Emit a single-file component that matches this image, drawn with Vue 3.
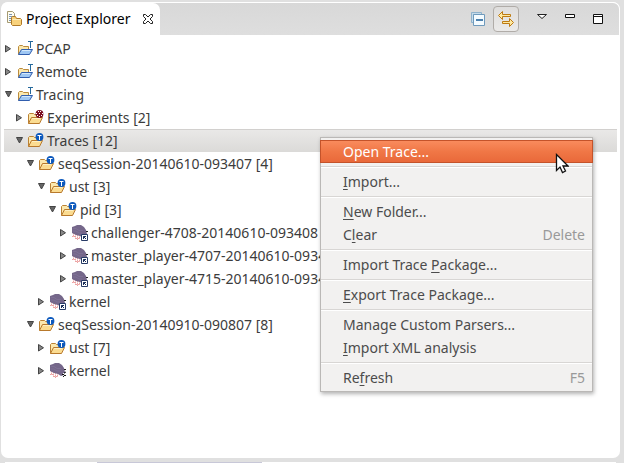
<script setup>
import { ref } from 'vue'

const rows = ref([
  { label: 'PCAP', depth: 0, icon: 'project', open: false },
  { label: 'Remote', depth: 0, icon: 'project', open: false },
  { label: 'Tracing', depth: 0, icon: 'project', open: true },
  { label: 'Experiments [2]', depth: 1, icon: 'experiments', open: false },
  { label: 'Traces [12]', depth: 1, icon: 'traces', open: true, selected: true },
  { label: 'seqSession-20140610-093407 [4]', depth: 2, icon: 'traces', open: true },
  { label: 'ust [3]', depth: 3, icon: 'traces', open: true },
  { label: 'pid [3]', depth: 4, icon: 'traces', open: true },
  { label: 'challenger-4708-20140610-093408', depth: 5, icon: 'link', open: false },
  { label: 'master_player-4707-20140610-093408', depth: 5, icon: 'link', open: false },
  { label: 'master_player-4715-20140610-093408', depth: 5, icon: 'link', open: false },
  { label: 'kernel', depth: 3, icon: 'link', open: false },
  { label: 'seqSession-20140910-090807 [8]', depth: 2, icon: 'traces', open: true },
  { label: 'ust [7]', depth: 3, icon: 'traces', open: false },
  { label: 'kernel', depth: 3, icon: 'kernel', open: false },
])

// Each label is split into [before, mnemonic, after]
const groups = [
  [{ text: ['Open Trace...', '', ''], active: true }],
  [{ text: ['', 'I', 'mport...'] }],
  [{ text: ['', 'N', 'ew Folder...'] }, { text: ['C', 'l', 'ear'], key: 'Delete' }],
  [{ text: ['Import Trace ', 'P', 'ackage...'] }],
  [{ text: ['', 'E', 'xport Trace Package...'] }],
  [{ text: ['Manage Custom Parsers...', '', ''] }, { text: ['', 'I', 'mport XML analysis'] }],
  [{ text: ['Re', 'f', 'resh'], key: 'F5' }],
]
</script>

<template>
  <div class="workbench">
    <section class="view">
      <header class="bar">
        <div class="tab">
          <svg class="tab-icon" width="16" height="16" viewBox="0 0 16 16">
            <path d="M1.500 .5h5l2 2v9h-7z" fill="#fffdf0" stroke="#a59a72" />
            <path d="M3 3.500h3M3 5.500h4M3 7.500h2M3 9.500h2" stroke="#7894b8" />
            <path d="M5.500 13.500v-7l1-1h3l1 2h4l1 1v5l-1 1h-8z" fill="#f8d27c" stroke="#b07a28" />
            <path d="M6.500 8.500h8" stroke="#fdecb8" />
          </svg>
          <h1 class="title">Project Explorer</h1>
          <button class="close" aria-label="Close">
            <svg width="12" height="12" viewBox="0 0 12 12">
              <path d="M1.500 1.500h2l2.500 2.500 2.500-2.500h2v2l-2.500 2.500 2.500 2.500v2h-2l-2.500-2.500-2.500 2.500h-2v-2l2.500-2.500-2.500-2.500z" fill="#fff" stroke="#222" />
            </svg>
          </button>
        </div>
        <div class="tools">
          <button class="tool" aria-label="Collapse All">
            <svg width="14" height="14" viewBox="0 0 14 14">
              <path d="M.5 10.500v-10h10v2h-8v8z" fill="#c5dbea" stroke="#8fb2cc" />
              <path d="M2.500 2.500h11v11h-11z" fill="#f4fbff" stroke="#6f9abc" />
              <path d="M5 8h7" stroke="#155895" stroke-width="1.300" />
            </svg>
          </button>
          <button class="tool pressed" aria-label="Link with Editor" aria-pressed="true">
            <svg width="16" height="16" viewBox="0 0 16 16">
              <path d="M.5 4.500l4-4v3h8v2h-8v3z" fill="#ffe9a0" stroke="#bd7a12" />
              <path d="M15.500 11.500l-4-4v3h-7v2h7v3z" fill="#ffe9a0" stroke="#bd7a12" />
            </svg>
          </button>
          <button class="tool menu-tool" aria-label="View Menu">
            <svg width="12" height="12" viewBox="0 0 12 12">
              <path d="M1.500 1.500h9l-4.500 4z" fill="#fff" stroke="#222" />
            </svg>
          </button>
          <button class="tool" aria-label="Minimize">
            <svg width="12" height="12" viewBox="0 0 12 12">
              <path d="M1.500 1.500h9v3h-9z" fill="#fff" stroke="#111" />
            </svg>
          </button>
          <button class="tool" aria-label="Maximize">
            <svg width="12" height="12" viewBox="0 0 12 12">
              <path d="M1.500 1.500h9v9h-9zM1 3.500h10" fill="#fff" stroke="#111" />
            </svg>
          </button>
        </div>
      </header>

      <ul class="tree" role="tree">
        <li
          v-for="(row, i) in rows"
          :key="i"
          role="treeitem"
          :aria-level="row.depth + 1"
          :aria-expanded="row.open"
          :aria-selected="!!row.selected"
          :class="['row', 'depth-' + row.depth, { selected: row.selected }]"
        >
          <button class="twisty" :aria-label="'Toggle ' + row.label" @click="row.open = !row.open">
            <svg width="10" height="10" viewBox="0 0 10 10">
              <path v-if="row.open" d="M1.500 1.500h6l-3 5.500z" fill="#666" stroke="#444" />
              <path v-else d="M1.500 1.500v6.500l5-3.250z" fill="#888" stroke="#444" />
            </svg>
          </button>
          <svg class="icon" width="16" height="16" viewBox="0 0 16 16">
            <template v-if="row.icon === 'project'">
              <path d="M1.500 13.500v-8l1-1h3l1 1h5v3" fill="#fbe8ae" stroke="#bb8b3c" />
              <path d="M1.500 13.500l3-5h11l-3 5z" fill="#9fc7f3" stroke="#315eae" />
              <path d="M5 9.500h8" stroke="#d4e9fc" />
              <path d="M11 .5h5M13.500 1v6" stroke="#25689b" />
            </template>
            <template v-else-if="row.icon === 'experiments' || row.icon === 'traces'">
              <path d="M.5 13.500v-9l1-1h4l1 1h5v4" fill="#fbe8ae" stroke="#bb8234" />
              <path d="M.5 13.500l3-6h11l-3 6z" fill="#fbdc91" stroke="#b8792c" />
              <path d="M4 8.500h8" stroke="#fff0c2" />
              <template v-if="row.icon === 'traces'">
                <circle cx="11.500" cy="4" r="3.900" fill="#0d59bd" />
                <path d="M9.500 2.500h4M11.500 3v4" stroke="#fff" />
              </template>
              <template v-else>
                <circle cx="11.500" cy="4" r="3.900" fill="#7b0d20" />
                <path d="M10 1h1v1h-1zM12 1h1v1h-1zM8 3h1v1h-1zM11 3h1v1h-1zM14 3h1v1h-1zM9 5h1v1h-1zM13 5h1v1h-1zM11 6h1v1h-1z" fill="#fff" />
              </template>
            </template>
            <template v-else>
              <path d="M1.500 8v4M3.500 9v5M5.500 10v5M7.500 10v4M0 11.500h4M4 13.500h4" fill="none" stroke="#eca3a3" stroke-dasharray="1.500 .5" />
              <path d="M0 2l3-1L5 0h4l3 2 2 3 1 4-1 3-3 1-3-2-4-1L0 8z" fill="#75678a" />
              <path d="M1 3.500h3l3 2h4M1 6h3l3 2h3" fill="none" stroke="#82749a" stroke-width=".7" />
              <path d="M14 6.500h2" stroke="#222" />
              <template v-if="row.icon === 'link'">
                <path d="M9.500 9.500h6v6h-6z" fill="#fff" stroke="#273b66" />
                <path d="M11.500 14v-2.500h2.500M11.500 11.500l2.500 2.500" fill="none" stroke="#172c56" />
              </template>
              <template v-else>
                <path d="M12 11.500h2M14 10l2-1M14 12.500h2M13.500 13v1" fill="none" stroke="#111" />
                <path d="M13 10.500h1" stroke="#fff" />
              </template>
            </template>
          </svg>
          <span class="label">{{ row.label }}</span>
        </li>
      </ul>
    </section>

    <div class="next-view"><span class="next-tab"></span></div>

    <div class="context-menu" role="menu">
      <div v-for="(group, g) in groups" :key="g" class="group" role="group">
        <button
          v-for="(item, i) in group"
          :key="i"
          role="menuitem"
          :class="['item', { active: item.active }]"
        >
          <span class="text">{{ item.text[0] }}<u v-if="item.text[1]">{{ item.text[1] }}</u>{{ item.text[2] }}</span>
          <span v-if="item.key" class="key">{{ item.key }}</span>
        </button>
      </div>
      <svg class="pointer" width="14" height="21" viewBox="0 0 14 21">
        <path d="M1.500 1.500v16l3.500-3.500 2.500 5.500 3-1.500-2.500-5h5z" fill="#fff" stroke="#111" stroke-width="1.300" />
      </svg>
    </div>
  </div>
</template>

<style>
body {
  margin: 0;
  background: #e0e0e0;
}
</style>

<style scoped>
.workbench {
  position: relative;
  box-sizing: border-box;
  min-height: 100vh;
  padding: 2px 4px 0 1px;
  display: flex;
  flex-direction: column;
  overflow: hidden;
  font-family: "Noto Sans", "Open Sans", sans-serif;
  font-size: 14px;
  color: #3c3c3c;
}
button {
  margin: 0;
  padding: 0;
  border: 0;
  background: none;
  font: inherit;
  color: inherit;
}
svg {
  display: block;
  flex: none;
}
.view {
  flex: 1;
  border-radius: 7px;
  background: #fff;
  overflow: hidden;
}
.bar {
  display: flex;
  justify-content: space-between;
  height: 32px;
  border: 1px solid #fff;
  border-bottom: 0;
  border-radius: 7px 7px 0 0;
  background: linear-gradient(#d8d8d8, #dedede);
}
.tab {
  display: flex;
  align-items: center;
  padding: 0 6px 0 4px;
  border-radius: 0 7px 0 0;
  background: #fff;
}
.title {
  margin: 0 12px 0 4px;
  font-size: 14px;
  font-weight: 400;
  line-height: 24px;
  color: #000;
  white-space: nowrap;
}
.tools {
  display: flex;
  align-items: center;
  gap: 2px;
  padding-right: 8px;
}
.tool {
  display: flex;
  align-items: center;
  justify-content: center;
  width: 26px;
  height: 26px;
  box-sizing: border-box;
}
.pressed {
  border: 1px solid #b0aca8;
  border-radius: 4px;
  background: linear-gradient(#dfdedd, #ebeae9);
}
.menu-tool {
  margin-left: 8px;
}
.tree {
  margin: 2px 3px 0;
  padding: 0;
  list-style: none;
}
.row {
  display: flex;
  align-items: center;
  height: 23px;
  white-space: nowrap;
}
.selected {
  background: linear-gradient(#eae9e8, #dbdad8);
  box-shadow: inset 0 1px #d2d0ce;
}
.depth-1 { padding-left: 11px; }
.depth-2 { padding-left: 22px; }
.depth-3 { padding-left: 33px; }
.depth-4 { padding-left: 44px; }
.depth-5 { padding-left: 55px; }
.twisty {
  width: 13px;
}
.label {
  margin-left: 3px;
}
.next-view {
  display: flex;
  height: 1px;
  margin: 4px 4px 0;
  background: #fff;
}
.next-tab {
  width: 27%;
  margin-left: 15%;
  background: #c8c8d8;
}
.context-menu {
  position: absolute;
  top: 137px;
  left: 320px;
  width: 273px;
  box-sizing: border-box;
  padding: 2px 0;
  border: 1px solid #bab8b6;
  background: #f2f1f0;
  box-shadow: 1px 2px 4px rgba(0, 0, 0, 0.3);
  color: #4c4c4c;
}
.group + .group {
  margin-top: 3px;
  padding-top: 2px;
  border-top: 1px solid #d8d6d4;
  box-shadow: inset 0 1px #fff;
}
.group + .group::before {
  content: "";
  display: block;
  height: 1px;
}
.item {
  display: flex;
  align-items: center;
  justify-content: space-between;
  box-sizing: border-box;
  width: 100%;
  height: 23px;
  padding: 0 7px 0 22px;
  white-space: nowrap;
}
.item u {
  text-underline-offset: 2px;
  text-decoration-skip-ink: none;
}
.key {
  color: #999;
}
.active {
  width: calc(100% + 2px);
  margin: 0 -1px;
  border: 1px solid #c4532a;
  background: linear-gradient(#f98b5d, #f07746 50%, #e9693a);
  color: #fff;
}
.pointer {
  position: absolute;
  top: 15px;
  left: 234px;
}
</style>
